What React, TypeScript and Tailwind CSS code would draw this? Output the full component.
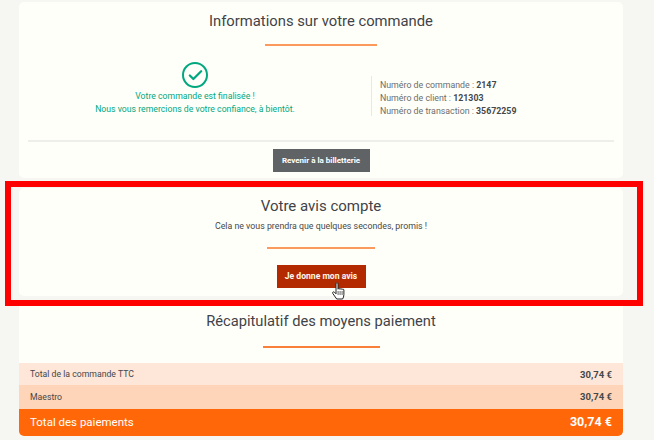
import { Check } from "lucide-react";

const Divider = ({ width }: { width: string }) => (
  <div className={`mx-auto h-[2px] bg-[#fb9a5c] ${width}`} />
);

const HandCursor = () => (
  <svg width="16" height="19" viewBox="0 0 15 19" className="absolute left-[331px] top-[95px] z-10">
    <path
      d="M4.5 1.8c0-1.3 2-1.3 2 0v5.4c.2-1 1.9-1 2 .1.2-.9 1.8-.9 2 .2.3-.8 1.8-.6 1.9.5v4.6c0 1.900-.6 3.200-1.300 4.400H5.200L1.300 11.500c-.8-1.100.6-2.300 1.600-1.300l1.600 1.600z"
      fill="#fff"
      stroke="#222"
      strokeWidth="1"
      strokeLinejoin="round"
    />
    <path d="M6.600 9v4M8.600 9v4M10.600 9v4" stroke="#222" strokeWidth="0.7" />
  </svg>
);

export default function App() {
  return (
    <div className="relative h-[440px] w-[654px] overflow-hidden bg-[#f6f6f2] font-['Roboto',sans-serif]">
      <div className="flex w-[604px] flex-col ml-[19px] pt-[2px]">
        {/* commande */}
        <section className="h-[176px] rounded-[5px] bg-[#fffffa] pt-[9px]">
          <h2 className="text-center text-[14.800px] leading-[20px] text-[#3f4347]">Informations sur votre commande</h2>
          <Divider width="w-[112px] mt-[13px]" />
          <div className="mt-[16px] flex h-[65px]">
            <div className="flex w-[352px] flex-col items-center text-[8.700px] text-[#00a77f]">
              <div className="flex h-[26px] w-[26px] items-center justify-center rounded-full border-[2.500px] border-[#00a77f]">
                <Check size={17} strokeWidth={3.2} />
              </div>
              <p className="mt-[2px] leading-[13px]">Votre commande est finalisée !</p>
              <p className="leading-[13px]">Nous vous remercions de votre confiance, à bientôt.</p>
            </div>
            <div className="mt-[14px] h-[40px] border-l border-[#e8e8e4] pl-[8px] text-[8.800px] leading-[13px] text-[#6a6d70]">
              <p className="mt-[3px]">Numéro de commande : <b className="text-[#45484a]">2147</b></p>
              <p>Numéro de client : <b className="text-[#45484a]">121303</b></p>
              <p>Numéro de transaction : <b className="text-[#45484a]">35672259</b></p>
            </div>
          </div>
          <hr className="mx-[9px] mt-[13px] border-t-2 border-[#eeeeea]" />
          <div className="mt-[7px] flex justify-center">
            <button className="h-[23px] w-[97px] bg-[#5f6366] text-[8px] font-bold text-white">Revenir à la billetterie</button>
          </div>
        </section>

        {/* avis */}
        <section className="mt-[10px] h-[108px] rounded-[5px] bg-[#fffffa] pt-[8px] text-center">
          <h2 className="text-[15px] leading-[20px] text-[#3f4347]">Votre avis compte</h2>
          <p className="mt-[4px] text-[8.800px] leading-[12px] text-[#45484a]">Cela ne vous prendra que quelques secondes, promis !</p>
          <Divider width="w-[108px] mt-[15px]" />
          <button className="mt-[16px] h-[23px] w-[89px] bg-[#b32a00] text-[8.600px] font-bold text-[#fff6ee]">Je donne mon avis</button>
        </section>

        {/* paiements */}
        <section className="mt-[6px] h-[134px] overflow-hidden rounded-[5px] bg-[#fffffa]">
          <h2 className="mt-[9px] text-center text-[14.700px] leading-[20px] text-[#3f4347]">Récapitulatif des moyens paiement</h2>
          <Divider width="w-[117px] mt-[15px] !bg-[#f9803a]" />
          <div className="mt-[15px] flex h-[22px] items-center justify-between bg-[#fee6d8] px-[11px] pt-[2px] text-[8.700px] text-[#45484a]">
            <span>Total de la commande TTC</span>
            <b className="text-[9.500px]">30,74 €</b>
          </div>
          <div className="flex h-[24px] items-center justify-between bg-[#fed5b8] px-[11px] pt-[1px] text-[8.700px] text-[#45484a]">
            <span>Maestro</span>
            <b className="text-[9.500px]">30,74 €</b>
          </div>
          <div className="flex h-[27px] items-center justify-between bg-[#ff6708] px-[11px] text-white">
            <span className="text-[11.500px]">Total des paiements</span>
            <b className="text-[12.500px]">30,74 €</b>
          </div>
        </section>
      </div>

      {/* cadre rouge */}
      <div className="pointer-events-none absolute left-[5px] top-[181px] z-20 h-[125px] w-[638px] border-[6px] border-[#ff0000]" />
      <div className="absolute inset-x-0 top-[187px]">
        <HandCursor />
      </div>
    </div>
  );
}
